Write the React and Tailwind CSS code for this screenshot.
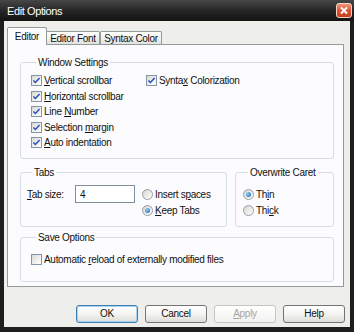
import { clsx } from 'clsx';

const Key = ({ children }) => (
    <span className="underline decoration-[1px] underline-offset-[1px]">{children}</span>
);

const CheckBox = ({ checked }) => (
    <span className="w-[11px] h-[11px] shrink-0 border border-[#8497aa] bg-linear-to-br from-[#dadad4] to-white flex items-center justify-center">
        {checked && (
            <svg width="9" height="9" viewBox="0 0 9 9">
                <path d="M1.4 4.4 L3.4 6.5 L7.6 1.9" fill="none" stroke="#2a4fc0" strokeWidth="1.5" />
            </svg>
        )}
    </span>
);

const Radio = ({ checked }) => (
    <span className="w-[11px] h-[11px] shrink-0 rounded-full border border-[#939ea8] bg-linear-to-br from-[#d6d6d0] to-white flex items-center justify-center">
        {checked && (
            <span className="w-[5px] h-[5px] rounded-full bg-[radial-gradient(circle_at_35%_35%,#8fd0fa,#1a5fae)]" />
        )}
    </span>
);

const CheckRow = ({ checked, children }) => (
    <label className="flex items-center h-[15.5px] gap-[2px] whitespace-nowrap">
        <CheckBox checked={checked} />
        <span>{children}</span>
    </label>
);

const RadioRow = ({ checked, children }) => (
    <label className="flex items-center h-[16px] gap-[2px] whitespace-nowrap">
        <Radio checked={checked} />
        <span>{children}</span>
    </label>
);

const Group = ({ title, className, children }) => (
    <fieldset className={clsx("border border-[#d5dde5] rounded-[3px]", className)}>
        <legend className="ml-[5px] px-[2px] h-[13px] leading-[13px]">{title}</legend>
        {children}
    </fieldset>
);

const Btn = ({ children, focus, disabled }) => (
    <button
        className={clsx(
            "w-[62px] h-[18px] rounded-[3px] border bg-linear-to-b leading-none",
            focus && "border-[#3c7fb1] shadow-[inset_0_0_0_1px_#a6d3f3] from-white via-[#f4f4f2] to-[#dcdcd6]",
            disabled && "border-[#c6c6c0] text-[#a4a4a4] from-white to-[#f2f2f0]",
            !focus && !disabled && "border-[#747474] from-white via-[#f4f4f2] to-[#dcdcd6]"
        )}
    >
        {children}
    </button>
);

const CloseIcon = () => (
    <svg width="16" height="15" viewBox="0 0 16 15" className="block">
        <defs>
            <linearGradient id="closeRed" x1="0" y1="0" x2="0" y2="1">
                <stop offset="0" stopColor="#f29a80" />
                <stop offset="0.5" stopColor="#dc5533" />
                <stop offset="1" stopColor="#c23c1f" />
            </linearGradient>
        </defs>
        <rect x="0.5" y="0.5" width="15" height="14" rx="2.5" fill="url(#closeRed)" stroke="#f4d3c8" />
        <path d="M5 4.5 L11 10.5 M11 4.5 L5 10.5" stroke="#ffffff" strokeWidth="1.9" />
    </svg>
);

export default function App() {
    return (
        <div className="w-[354px] h-[332px] bg-[#1e1e1e] flex flex-col font-['Liberation_Sans',Arial,sans-serif] text-[10px] tracking-[-0.3px] text-[#111]">
            {/* Title bar */}
            <header className="h-[21px] shrink-0 flex items-center justify-between pl-[7px] pr-[2px] bg-linear-to-b from-[#474747] via-[#272727] to-[#131313]">
                <span className="text-white text-[11px] tracking-[-0.4px] pt-[1px]">Edit Options</span>
                <CloseIcon />
            </header>

            {/* Dialog body */}
            <div className="flex-1 mx-[4px] mb-[5px] bg-[#eeeeea] pt-[6px] pl-[3px] pr-[6px] flex flex-col">
                {/* Tabs */}
                <div className="flex items-end h-[17px]">
                    <div className="relative z-10 w-[40px] h-[18px] -mb-px bg-[#fcfcfe] border border-b-0 border-[#919b9c] rounded-t-[2px] flex items-center justify-center">
                        Editor
                    </div>
                    <div className="-ml-px w-[54px] h-[13px] border border-b-0 border-[#919b9c] rounded-t-[2px] bg-linear-to-b from-white to-[#e2e2dc] flex items-center justify-center">
                        Editor Font
                    </div>
                    <div className="w-[62px] h-[13px] border border-b-0 border-[#919b9c] rounded-t-[2px] bg-linear-to-b from-white to-[#e2e2dc] flex items-center justify-center">
                        Syntax Color
                    </div>
                </div>

                {/* Tab panel */}
                <div className="h-[243px] shrink-0 bg-[#fcfcfe] border border-[#919b9c] pt-[11px] pl-[12px] pr-[9px] flex flex-col">
                    <Group title="Window Settings" className="pt-[4px] pl-[10px] pb-[7.5px]">
                        <div className="flex">
                            <div className="w-[115px] flex flex-col">
                                <CheckRow checked><Key>V</Key>ertical scrollbar</CheckRow>
                                <CheckRow checked><Key>H</Key>orizontal scrollbar</CheckRow>
                                <CheckRow checked>Line <Key>N</Key>umber</CheckRow>
                                <CheckRow checked>Selection <Key>m</Key>argin</CheckRow>
                                <CheckRow checked><Key>A</Key>uto indentation</CheckRow>
                            </div>
                            <div className="flex flex-col">
                                <CheckRow checked>Synta<Key>x</Key> Colorization</CheckRow>
                            </div>
                        </div>
                    </Group>

                    <div className="flex gap-[8px] mt-[7px]">
                        <Group title="Tabs" className="w-[207px] pt-[6px] pl-[6px] pb-[8px]">
                            <div className="flex items-start">
                                <div className="flex items-center h-[18px]">
                                    <span className="w-[48px] whitespace-nowrap"><Key>T</Key>ab size:</span>
                                    <input
                                        readOnly
                                        value="4"
                                        className="w-[60px] h-[18px] border border-[#7f8fa0] bg-white px-[4px] text-[10px] outline-none"
                                    />
                                </div>
                                <div className="ml-[7px] mt-[1px] flex flex-col">
                                    <RadioRow>Insert s<Key>p</Key>aces</RadioRow>
                                    <RadioRow checked><Key>K</Key>eep Tabs</RadioRow>
                                </div>
                            </div>
                        </Group>
                        <Group title="Overwrite Caret" className="w-[99px] pt-[7px] pl-[7px] pb-[8px]">
                            <RadioRow checked>Th<Key>i</Key>n</RadioRow>
                            <RadioRow>Thi<Key>c</Key>k</RadioRow>
                        </Group>
                    </div>

                    <Group title="Save Options" className="mt-[4px] pt-[8px] pl-[10px] pb-[13px]">
                        <CheckRow>Automatic <Key>r</Key>eload of externally modified files</CheckRow>
                    </Group>
                </div>

                {/* Buttons */}
                <div className="flex justify-end gap-[7px] mt-[18px] -mr-px">
                    <Btn focus>OK</Btn>
                    <Btn>Cancel</Btn>
                    <Btn disabled><Key>A</Key>pply</Btn>
                    <Btn>Help</Btn>
                </div>
            </div>
        </div>
    );
}
